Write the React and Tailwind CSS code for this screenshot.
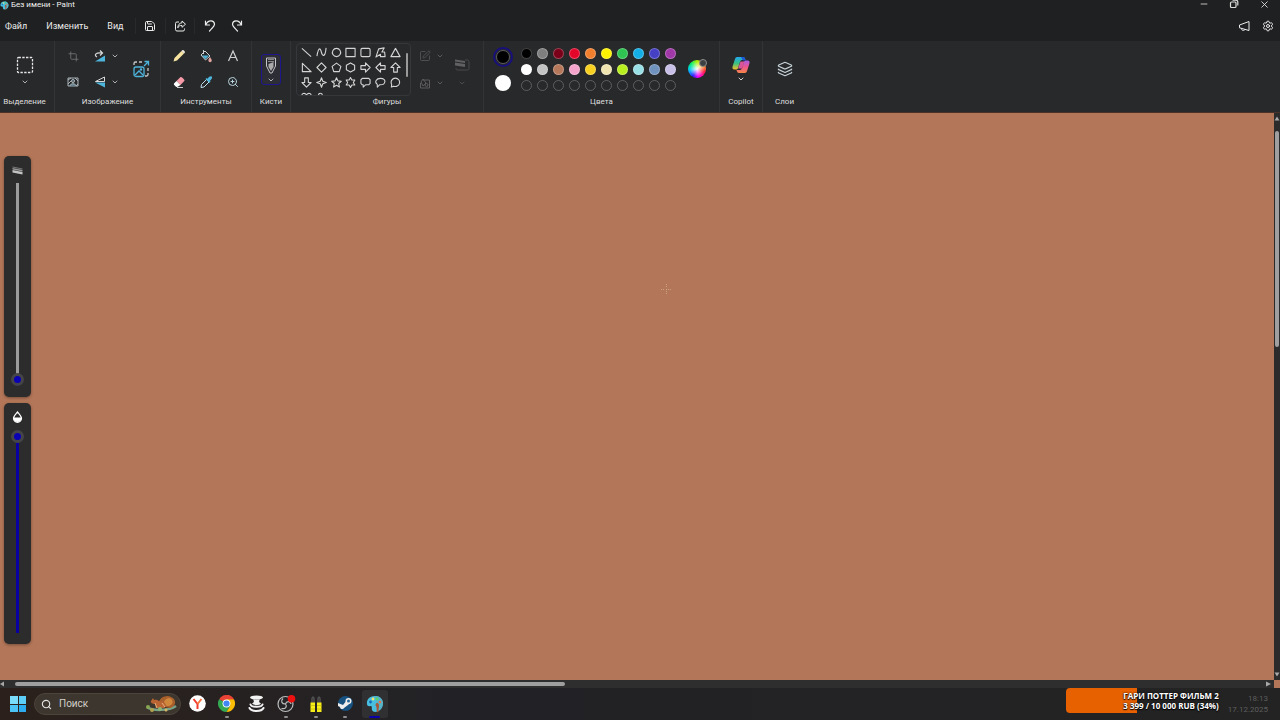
import { Save, Minus, X, Settings, ChevronDown, Crop, ZoomIn, Search, Layers, SquarePen } from "lucide-react";

const palette = [
  ["#000000", "#7f7f7f", "#7a0019", "#e3062b", "#f27f2e", "#fff200", "#2fc351", "#14aee6", "#4540c4", "#a038a8"],
  ["#ffffff", "#c3c3c3", "#b5785a", "#f4a3cb", "#f7d020", "#efe4b0", "#b8f01f", "#99dfe6", "#7092be", "#c8bfe7"],
];

const shapes = [
  "M1 1.5L11 10.5",
  "M1 10C3-2 5 2 6 6S10 12 11 1",
  "M6 1.5a4.5 4.5 0 1 0 .01 0z",
  "M1 1.5h10v9H1z",
  "M2.5 1.5h7a1.5 1.5 0 0 1 1.500 1.500v6a1.500 1.500 0 0 1-1.500 1.500h-7A1.500 1.500 0 0 1 1 9V3a1.500 1.500 0 0 1 1.500-1.500z",
  "M1 11L4 2 10 1 7.500 5.500h3L11 10.500H6V8z",
  "M6 1.500L11 10.500H1z",
  "M1.500 1.500v9H11z",
  "M6 1l5 5-5 5-5-5z",
  "M6 1.200l4.800 3.600L9 10.500H3L1.200 4.800z",
  "M6 1l4.500 2.500v5L6 11 1.500 8.500v-5z",
  "M1 4h5V1l5 5-5 5V8H1z",
  "M11 4H6V1L1 6l5 5V8h5z",
  "M4 11V6H1l5-5 5 5H8v5z",
  "M4 1v5H1l5 5 5-5H8V1z",
  "M6 .8l1.400 3.800L11.200 6 7.400 7.400 6 11.200 4.600 7.400.8 6l3.800-1.400z",
  "M6 .8l1.500 3.400 3.700.4-2.800 2.500.8 3.900L6 9.100 2.800 11l.8-3.900L.8 4.600l3.700-.4z",
  "M6 .6l1.500 2.700h3.200L9.100 6l1.600 2.700H7.500L6 11.400 4.500 8.700H1.300L2.900 6 1.300 3.300h3.200z",
  "M2.500 1.500h7L11 3v4L9.500 8.500H6L3.500 11V8.500h-1L1 7V3z",
  "M6 1.500c7 0 6 7.500-1 7L2.500 11V8C-1 5.500 1.500 1.500 6 1.500z",
  "M6 1.200a4.600 4.600 0 1 1-2 8.800L1.500 11l.3-3A4.600 4.600 0 0 1 6 1.200z",
  "M6 11L1 6C0 1 4 .5 6 3 8 .5 12 1 11 6z",
  "M3 11V4C2 .5 7 .5 7 4l4 3v4z",
];

function Group({ label, className, children }) {
  return (
    <section className={`flex shrink-0 flex-col items-center border-r border-[#333436] pt-px ${className}`}>
      <div className="flex h-[54px] w-full items-center justify-center">{children}</div>
      <h2 className="h-3 text-[8px] leading-3 whitespace-nowrap text-[#dedede]">{label}</h2>
    </section>
  );
}

function Tool({ label, children, className = "" }) {
  return (
    <button aria-label={label} className={`flex items-center justify-center ${className}`}>
      {children}
    </button>
  );
}

function Chevron({ className = "text-[#b0b0b0]" }) {
  return <ChevronDown size={8} strokeWidth={3} className={className} />;
}

function PaintIcon({ size }) {
  return (
    <svg width={size} height={size} viewBox="0 0 18 18">
      <path d="M9 1C3 1 .5 5 1 9c0 2 2 2.500 3.500 2 2 0 1 2 1.500 4 1 3 6 2 8 0 3-3 4-8 1-11.500C13.500 1.500 11 1 9 1z" fill="#49bfe0" />
      <path d="M9 1c4-.5 8 3 8 7 0 3-1 5-3 7L11 9z" fill="#55b3c8" />
      <circle cx="4.500" cy="7" r="1.400" fill="#1669b8" />
      <circle cx="7" cy="4" r="1.400" fill="#f7e36c" />
      <circle cx="11" cy="4" r="1.400" fill="#58d66a" />
      <circle cx="14" cy="7" r="1.300" fill="#ef7045" />
      <path d="M10.500 8c1.500-.5 2.500 1 2.500 2.500l-.5 6c-.4 1-1.500 1-1.700 0L10.500 12C9 10.500 9.500 9 10.500 8z" fill="#a85738" />
    </svg>
  );
}

function TitleBar() {
  return (
    <div className="flex h-3 items-start justify-between overflow-hidden">
      <div className="flex h-[10px] items-center gap-[2px]">
        <PaintIcon size={9} />
        <h1 className="text-[8px] leading-[10px] text-[#f0f0f0]">Без имени - Paint</h1>
      </div>
      <div className="flex h-2 items-center gap-5 pr-[10px] text-[#dcdcdc]">
        <Tool label="Свернуть"><Minus size={10} /></Tool>
        <Tool label="Восстановить">
          <svg width="10" height="10" viewBox="0 0 10 10" fill="none" stroke="currentColor" strokeWidth="1.200">
            <rect x="1.500" y="3" width="5.500" height="5.500" rx="1" />
            <path d="M3.500 1.200H7A1.800 1.800 0 0 1 8.800 3v3.500" />
          </svg>
        </Tool>
        <Tool label="Закрыть"><X size={11} /></Tool>
      </div>
    </div>
  );
}

function MenuBar() {
  return (
    <div className="flex h-[29px] items-center justify-between pr-[6px] pb-px pl-[5px] text-[#ececec]">
      <div className="flex items-center">
        <nav className="flex gap-[19px] pr-[11px] text-[9px] leading-4">
          <button>Файл</button>
          <button>Изменить</button>
          <button>Вид</button>
        </nav>
        <Tool label="Сохранить" className="h-4 w-[30px] border-l border-[#292a2b]"><Save size={12} /></Tool>
        <Tool label="Поделиться" className="h-4 w-[30px] border-x border-[#292a2b]">
          <svg width="12" height="12" viewBox="0 0 12 12" fill="none" stroke="currentColor" strokeLinejoin="round">
            <path d="M5 2H3a1.500 1.500 0 0 0-1.500 1.500v6A1.500 1.500 0 0 0 3 11h6a1.500 1.500 0 0 0 1.500-1.500V8.500M8 1l3.500 3.200L8 7.300V5.500C6 5.300 4.700 6 3.800 7.800 3.800 5 5.500 3 8 2.800z" />
          </svg>
        </Tool>
        <Tool label="Отменить" className="h-4 w-[30px]">
          <svg width="12" height="12" viewBox="0 0 12 12" fill="none" stroke="currentColor" strokeWidth="1.200" strokeLinecap="round">
            <path d="M1.500 1v4h4M1.800 4.700C4-.2 10-.2 10.500 4c.2 2-2 3.800-5 7" />
          </svg>
        </Tool>
        <Tool label="Повторить" className="h-4 w-[24px]">
          <svg width="12" height="12" viewBox="0 0 12 12" fill="none" stroke="currentColor" strokeWidth="1.200" strokeLinecap="round">
            <path d="M10.500 1v4h-4M10.200 4.700C8-.2 2-.2 1.500 4c-.2 2 2 3.800 5 7" />
          </svg>
        </Tool>
      </div>
      <div className="flex items-center gap-3">
        <Tool label="Отзыв">
          <svg width="12" height="12" viewBox="0 0 12 12" fill="none" stroke="currentColor" strokeLinejoin="round">
            <path d="M11 1.500v9L1.500 7.800V5zM3.500 8.500c0 2.500 3 2.500 3.500.7" />
          </svg>
        </Tool>
        <Tool label="Параметры"><Settings size={12} /></Tool>
      </div>
    </div>
  );
}

function ImageGroup() {
  return (
    <div className="flex w-full items-center gap-[13px] pl-[2px]">
      <div className="grid grid-cols-[32px_22px_8px] items-center gap-y-[14px]">
        <Tool label="Обрезать"><Crop size={11} className="text-[#707070]" /></Tool>
        <Tool label="Повернуть">
          <svg width="12" height="12" viewBox="0 0 12 12" fill="none">
            <path d="M11 5.500v6H1z" fill="#4db5dc" />
            <path d="M3 7C0 5 1 2.500 8 3M6 .5l2.500 2.500L6 5.500" stroke="#d8d8d8" strokeWidth="1.200" />
          </svg>
        </Tool>
        <Chevron />
        <Tool label="Удалить фон">
          <svg width="12" height="12" viewBox="0 0 12 12" fill="none" stroke="#a9b4b9">
            <path d="M1 2h10v8H1zM1 4l3-2M1 8l3-3M8 2l3 3M9 10l2-2" />
            <circle cx="6" cy="5" r="1.500" fill="#4a5860" />
            <path d="M3 10c0-3 6-3 6 0" fill="#5e8090" />
          </svg>
        </Tool>
        <Tool label="Отразить">
          <svg width="12" height="12" viewBox="0 0 12 12" fill="none">
            <path d="M10.500 1v4.500H1.500z" stroke="#d8d8d8" />
            <path d="M1 6.500h10V11.500z" fill="#4db5dc" />
          </svg>
        </Tool>
        <Chevron />
      </div>
      <Tool label="Изменить размер">
        <svg width="18" height="18" viewBox="0 0 18 18" fill="none" stroke="#4db5dc" strokeWidth="1.300">
          <path d="M2 5V3.500A1.500 1.500 0 0 1 3.500 2H5M7 2h3M16 8v3M16 13v1.500a1.500 1.500 0 0 1-1.500 1.500H13" stroke="#c8c8c8" />
          <rect x="2" y="7" width="10" height="9.500" rx="2" />
          <path d="M3 15l4-4 4 4M12 6l4-4M12.500 1.500h4v4" />
          <circle cx="9" cy="9.500" r=".6" />
        </svg>
      </Tool>
    </div>
  );
}

function ToolsGroup() {
  return (
    <div className="grid grid-cols-3 gap-x-[13px] gap-y-3">
      <Tool label="Карандаш">
        <svg width="14" height="14" viewBox="0 0 14 14">
          <path d="M1.500 12.500l1-3.500L9.500 2 12 4.500 5 11.500z" fill="#f7e3a0" />
          <path d="M9.500 2l.8-.8c1-.8 3.200 1.500 2.500 2.500l-.8.8z" fill="#f4f0e8" />
        </svg>
      </Tool>
      <Tool label="Заливка">
        <svg width="14" height="14" viewBox="0 0 14 14" fill="none">
          <path d="M2 6l4-4 5 5-4.500 4z" stroke="#c8d0d4" />
          <path d="M3 6.500h7L6.500 10z" fill="#4db5dc" />
          <path d="M4.500 1v4" stroke="#c8d0d4" />
          <path d="M11 8c1 1.500 1.800 2.500 1.800 3.500a1.700 1.700 0 0 1-3.400 0C9.400 10.500 10 9.500 11 8z" fill="#e3a3a0" />
        </svg>
      </Tool>
      <Tool label="Текст">
        <svg width="14" height="14" viewBox="0 0 14 14" fill="none" stroke="#cfcfcf" strokeWidth="1.200">
          <path d="M2.500 12L7 2l4.500 10M4.300 8.500h5.400" />
        </svg>
      </Tool>
      <Tool label="Ластик">
        <svg width="14" height="14" viewBox="0 0 14 14">
          <path d="M4.500 6l4-4c.8-.7 4.500 2.500 4 3.800L8.500 10z" fill="#f59aa6" />
          <path d="M4.500 6L2 8.500c-.8 1 2 3.800 3.200 3.500L8.500 10z" fill="#fff" />
          <path d="M5 12.500h6" stroke="#ccc" />
        </svg>
      </Tool>
      <Tool label="Палитра">
        <svg width="14" height="14" viewBox="0 0 14 14">
          <path d="M2 12.500l.5-3L7.500 4.500l2.500 2.500-5 5z" fill="none" stroke="#bfe1ee" />
          <path d="M6.500 4l1-1 1 .8C10 1.500 12 .8 12.800 1.800s0 2.500-1.800 3.900l.5 1-1 1z" fill="#4db5dc" />
        </svg>
      </Tool>
      <Tool label="Масштаб">
        <ZoomIn size={12} className="text-[#b9d6e0]" />
      </Tool>
    </div>
  );
}

function ShapesGroup() {
  return (
    <div className="flex w-full items-start pl-[5px]">
      <div className="flex h-[53px] w-[115px] shrink-0 overflow-hidden rounded-sm border border-[#36373a] pl-[2px]">
        <div className="grid w-[104px] shrink-0 auto-rows-[15px] grid-cols-7 content-start pt-px">
          {shapes.map((d) => (
            <button key={d} aria-label="Фигура" className="flex h-[15px] items-center justify-center">
              <svg width="11" height="11" viewBox="0 0 12 12" fill="none" stroke="#d4d4d4" strokeWidth="1.200" strokeLinejoin="round">
                <path d={d} />
              </svg>
            </button>
          ))}
        </div>
        <div className="mt-[9px] ml-[3px] h-6 w-[2px] shrink-0 rounded-full bg-[#9a9a9a]" />
      </div>
      <div className="grid grid-cols-[12px_8px] items-center gap-x-[5px] gap-y-[15px] pt-[7px] pl-2 text-[#5c5c5e]">
        <Tool label="Контур"><SquarePen size={12} strokeWidth={1.5} /></Tool>
        <Chevron className="text-[#5c5c5e]" />
        <Tool label="Заливка фигуры">
          <svg width="12" height="12" viewBox="0 0 12 12" fill="none" stroke="currentColor">
            <path d="M4 3h6.500v8h-9V6M2 5l2-3 3 4-3 3z" />
            <circle cx="7.500" cy="8" r="1.500" />
          </svg>
        </Tool>
        <Chevron className="text-[#5c5c5e]" />
      </div>
      <button aria-label="Размер" className="flex flex-col items-center gap-2 pt-[15px] pl-[10px]">
        <svg width="16" height="13" viewBox="0 0 16 13" fill="none">
          <path d="M2 10v.5A1.500 1.500 0 0 0 3.500 12h10a1.500 1.500 0 0 0 1.500-1.500v-7A1.500 1.500 0 0 0 13.500 2H11" stroke="#4a4a4c" />
          <path d="M1 1.500l10 1.500v2L1 3.500zM1 4.500L11 6v3L1 7.500z" fill="#606062" />
        </svg>
        <Chevron className="text-[#4c4c4e]" />
      </button>
    </div>
  );
}

function ColorsGroup() {
  return (
    <div className="flex w-full items-center pl-[9px]">
      <div className="flex w-5 flex-col items-center gap-2">
        <button aria-label="Цвет 1" className="size-5 rounded-full border-2 border-[#17107a] p-px">
          <span className="block size-full rounded-full border border-[#5c5c60] bg-black" />
        </button>
        <button aria-label="Цвет 2" className="size-4 rounded-full bg-white" />
      </div>
      <div className="ml-2 grid grid-cols-10 gap-[5px]">
        {palette.flat().map((color) => (
          <button
            key={color}
            aria-label={color}
            className="size-[11px] rounded-full border border-white/25 bg-clip-border"
            style={{ backgroundColor: color }}
          />
        ))}
        {Array.from({ length: 10 }, (_, i) => (
          <button key={i} aria-label="Пустой цвет" className="size-[11px] rounded-full border border-[#5f5f61]" />
        ))}
      </div>
      <button
        aria-label="Изменение цветов"
        className="relative ml-3 size-[18px] rounded-full bg-[radial-gradient(circle,white_0%,transparent_60%),conic-gradient(#a8f000,#ffd030_50deg,#ff2040_110deg,#ff00ff_170deg,#3020ff_210deg,#00c0ff_260deg,#00f070_310deg,#a8f000)]"
      >
        <span className="absolute -top-px -right-px size-2 rounded-full border border-[#8e8e8e] bg-[#3c4040]" />
      </button>
    </div>
  );
}

function Ribbon() {
  return (
    <div className="flex h-[72px] border-b border-[#4a3228] bg-[#28292b]">
      <Group label="Выделение" className="w-[55px] pr-[5px]">
        <button aria-label="Выделение" className="flex flex-col items-center gap-1 pt-1">
          <svg width="18" height="18" viewBox="0 0 18 18" fill="none" stroke="#e6e6e6" strokeWidth="1.300">
            <rect x="1.500" y="1.500" width="15" height="15" rx="1" strokeDasharray="2.400 1.350" />
          </svg>
          <Chevron />
        </button>
      </Group>
      <Group label="Изображение" className="w-[106px]"><ImageGroup /></Group>
      <Group label="Инструменты" className="w-[91px]"><ToolsGroup /></Group>
      <Group label="Кисти" className="w-[39px]">
        <button aria-label="Кисти" className="flex h-[31px] w-5 flex-col items-center justify-between rounded-[3px] border border-[#1d168c] bg-[#2d2d36] pt-[2px]">
          <svg width="12" height="17" viewBox="0 0 12 17" fill="none" stroke="#c4c4c4">
            <path d="M1.500 1h9v8L7 16H5L1.500 9z" />
            <path d="M3 2.500h6M3 4.500h6" stroke="#888" />
            <path d="M3.500 7L8.500 5v5L6 14l-2.500-4z" fill="#aaa" stroke="none" />
          </svg>
          <Chevron />
        </button>
      </Group>
      <Group label="Фигуры" className="w-[193px]"><ShapesGroup /></Group>
      <Group label="Цвета" className="w-[236px]"><ColorsGroup /></Group>
      <Group label="Copilot" className="w-[43px]">
        <button aria-label="Copilot" className="flex flex-col items-center gap-px">
          <svg width="18" height="18" viewBox="0 0 18 18">
            <defs>
              <linearGradient id="cpA" x1="0" y1="0" x2="0" y2="1">
                <stop offset="0" stopColor="#22a8f0" /><stop offset=".5" stopColor="#37bf83" /><stop offset="1" stopColor="#f4bd28" />
              </linearGradient>
              <linearGradient id="cpB" x1="0" y1="0" x2="0" y2="1">
                <stop offset="0" stopColor="#a45ce8" /><stop offset=".5" stopColor="#ec5590" /><stop offset="1" stopColor="#f58648" />
              </linearGradient>
            </defs>
            <path d="M5 1h6c1.500 0 2 1 2.500 3H10c-1 0-1.500.8-2 2L6 12c-.4 1-1 1.500-2 1.500H2.500C.5 13.500 0 12 .7 10L3 3c.4-1.300 1-2 2-2z" fill="url(#cpA)" />
            <path d="M13 17H7c-1.500 0-2-1-2.500-3H8c1 0 1.500-.8 2-2l2-6c.4-1 1-1.500 2-1.500h1.500c2 0 2.500 1.500 1.800 3.500L15 15c-.4 1.300-1 2-2 2z" fill="url(#cpB)" />
            <path d="M9 1h2c1.500 0 2 1 2.500 3.500H11z" fill="#1d55d8" />
            <path d="M8.500 5.500h4L10 12.500H6z" fill="#d8559a" />
          </svg>
          <Chevron className="text-[#d0d0d0]" />
        </button>
      </Group>
      <Group label="Слои" className="w-[43px] border-r-0">
        <Tool label="Слои"><Layers size={16} strokeWidth={1.8} className="text-[#c4d2d8]" /></Tool>
      </Group>
    </div>
  );
}

const sliderBase =
  "h-[203px] w-[13px] appearance-none bg-transparent [writing-mode:vertical-lr] [direction:rtl] [&::-webkit-slider-runnable-track]:h-full [&::-webkit-slider-runnable-track]:w-[13px] [&::-webkit-slider-runnable-track]:bg-[length:3px_100%] [&::-webkit-slider-runnable-track]:bg-center [&::-webkit-slider-runnable-track]:bg-no-repeat [&::-webkit-slider-thumb]:size-[13px] [&::-webkit-slider-thumb]:appearance-none [&::-webkit-slider-thumb]:rounded-full [&::-webkit-slider-thumb]:border-[3px] [&::-webkit-slider-thumb]:border-[#454547] [&::-webkit-slider-thumb]:bg-[#0a00b4]";

function SidePanel({ icon, label, value, track }) {
  return (
    <div className="flex w-[27px] flex-col items-center gap-[6px] rounded-[5px] bg-[#2c2c2c] pt-[7px] pb-[11px] shadow-[0_1px_3px_rgba(0,0,0,0.35)]">
      <div className="flex h-[14px] items-center">{icon}</div>
      <input type="range" aria-label={label} defaultValue={value} className={`${sliderBase} ${track}`} />
    </div>
  );
}

function Canvas() {
  return (
    <main className="flex grow flex-col bg-[#b37658]">
      <div className="flex grow">
        <div className="relative flex grow flex-col gap-[6px] pt-[43px] pl-1">
          <SidePanel
            label="Размер"
            value={0}
            track="[&::-webkit-slider-runnable-track]:bg-[linear-gradient(#9b9b9b_98%,#0a00b4_98%)]"
            icon={
              <svg width="11" height="9" viewBox="0 0 11 9">
                <path d="M.5.500l10 2v1l-10-2z" fill="#777" />
                <path d="M.5 2l10 2v1.500l-10-2z" fill="#999" />
                <path d="M.5 4l10 2v2.500l-10-2z" fill="#c4c4c4" />
              </svg>
            }
          />
          <SidePanel
            label="Непрозрачность"
            value={100}
            track="[&::-webkit-slider-runnable-track]:bg-[linear-gradient(#0a00a0,#0a00a0)]"
            icon={
              <svg width="11" height="12" viewBox="0 0 11 12">
                <path d="M5.500 1C4 2.800 1.500 5 1.500 7.300a4 4 0 0 0 8 0C9.500 5 7 2.800 5.500 1z" fill="none" stroke="#fff" strokeWidth="1.200" />
                <path d="M1.500 6.500h8c.5 6-8.500 6-8 0z" fill="#fff" />
              </svg>
            }
          />
          <svg className="absolute top-[171px] left-[661px]" width="11" height="11" viewBox="0 0 11 11" stroke="#d8b48e" strokeOpacity=".7">
            <path d="M5.500 0v4M5.500 7v4M0 5.500h4M7 5.500h4" strokeDasharray="1 1" />
            <path d="M5 5.500h1" stroke="#cfd49c" />
          </svg>
        </div>
        <div className="flex w-[6px] shrink-0 flex-col items-center bg-[#2b2b2b] py-[3px]">
          <svg width="6" height="5" viewBox="0 0 6 5"><path d="M3 .500L5.500 4.500h-5z" fill="#a8a8a8" /></svg>
          <div className="flex w-1 grow flex-col pt-[10px]">
            <div className="h-2/5 rounded-full bg-[#9f9f9f]" />
          </div>
          <svg width="6" height="5" viewBox="0 0 6 5"><path d="M3 4.500L.5.500h5z" fill="#a8a8a8" /></svg>
        </div>
      </div>
      <div className="mr-[6px] flex h-2 items-center justify-between bg-[#2e2e2e]">
        <svg width="5" height="6" viewBox="0 0 5 6"><path d="M0 3l4-2.500v5z" fill="#a8a8a8" /></svg>
        <div className="flex grow pl-[10px]">
          <div className="h-1 w-[44%] rounded-full bg-[#9f9f9f]" />
        </div>
        <svg width="9" height="6" viewBox="0 0 9 6"><path d="M6 3L1 .500v5z" fill="#a8a8a8" /></svg>
      </div>
    </main>
  );
}

function TaskButton({ label, running, active, children }) {
  return (
    <button
      aria-label={label}
      className={`flex h-[28px] w-[26px] flex-col items-center justify-between rounded-[3px] pt-[5px] ${active ? "bg-[#303033]" : ""}`}
    >
      {children}
      <span className={`h-[2px] rounded-full ${active ? "w-[11px] bg-[#0c00a8]" : running ? "w-1 bg-[#8f8f8f]" : "w-1"}`} />
    </button>
  );
}

function Taskbar() {
  return (
    <footer className="relative flex h-8 shrink-0 items-center justify-between bg-linear-to-r from-[#2b201b] via-[#222226] via-35% to-[#232323] pr-3 pl-[10px]">
      <div className="flex items-center">
        <button aria-label="Пуск" className="grid size-4 grid-cols-2 gap-px">
          <span className="bg-[#79dcfa]" />
          <span className="bg-[#5bcdf7]" />
          <span className="bg-[#4cc2f5]" />
          <span className="bg-[#2cacee]" />
        </button>
        <label className="mr-[3px] ml-2 flex h-[22px] w-[147px] items-center gap-[7px] rounded-full border border-[#4a443b] bg-[#3c362e] pr-px pl-[6px]">
          <Search size={11} strokeWidth={2.5} className="shrink-0 text-[#e0e0e0]" />
          <input placeholder="Поиск" aria-label="Поиск" className="w-0 grow text-[10px] leading-4 outline-none placeholder:text-[#d2cec8]" />
          <svg width="34" height="18" viewBox="0 0 34 18">
            <path d="M2 12c5 4 22 4 29-1" fill="none" stroke="#78a287" strokeWidth="2.500" />
            <path d="M15 11C11 4 21-1 26 2c7 3 4 10-1 11z" fill="#a9602c" />
            <path d="M19 9c-1-5 6-8 8-4s-2 6-5 6z" fill="#d0883d" />
            <path d="M6 6l2-3 1 2c4-1 4 2 9 2 3 0 4 5 1 6h-8c-1-1 0-3-1-4C8 9 5 8 6 6z" fill="#ba6433" />
            <path d="M10 8l2 5M17 8l3 4" stroke="#e6b080" />
            <circle cx="3" cy="12" r="2" fill="#89a652" />
            <circle cx="7" cy="15" r="2" fill="#b1a34e" />
            <circle cx="15" cy="14" r="2" fill="#8db474" />
            <circle cx="21" cy="15" r="1.500" fill="#d7b966" />
          </svg>
        </label>
        <div className="flex w-[204px] justify-between">
          <TaskButton label="Яндекс Браузер">
            <svg width="17" height="17" viewBox="0 0 17 17" fill="none">
              <circle cx="8.500" cy="8.500" r="8.300" fill="#fff" />
              <path d="M4.500 4l4 5M8.500 8.500V14" stroke="#f23b2c" strokeWidth="2" />
              <path d="M12.500 4l-4 5" stroke="#f9733a" strokeWidth="2" />
            </svg>
          </TaskButton>
          <TaskButton label="Chrome" running>
            <svg width="17" height="17" viewBox="0 0 18 18">
              <path d="M9 9L1.200 4.500A9 9 0 0 1 16.800 4.500z" fill="#e94335" />
              <path d="M9 9L1.200 4.500A9 9 0 0 0 9 18l4-6.700z" fill="#34a853" />
              <path d="M9 4.500h7.800A9 9 0 0 1 9 18l4-6.700z" fill="#fbbc05" />
              <path d="M9 0a9 9 0 0 1 7.800 4.500H9z" fill="#e94335" />
              <circle cx="9" cy="9" r="4.200" fill="#fff" />
              <circle cx="9" cy="9" r="3.300" fill="#4285f4" />
            </svg>
          </TaskButton>
          <TaskButton label="Лаунчер">
            <svg width="17" height="17" viewBox="0 0 17 17" fill="none" stroke="#f2f2f2" strokeLinecap="round">
              <ellipse cx="8.500" cy="2.500" rx="6.500" ry="2" fill="#f2f2f2" stroke="none" />
              <path d="M5 4.500c1.500 2 1 3-1 4 1.500 2 7.500 2 9 0-2-1-2.500-2-1-4" fill="#f2f2f2" stroke="none" />
              <path d="M2.500 9.500c1 3 11 3 12 0M1.500 13c2 4 12 4 14 0" strokeWidth="2" />
            </svg>
          </TaskButton>
          <TaskButton label="OBS" running>
            <svg width="20" height="18" viewBox="0 0 20 18" fill="none">
              <circle cx="9.500" cy="9" r="7.500" fill="#242426" stroke="#bcbcbc" strokeWidth="1.200" />
              <path d="M9.500 9C5.500 9 4.500 6 7 3.500M9.500 9c1-3.500 5-3 5.500 0M9.500 9c2 2.500 0 5.500-4 4.500" stroke="#bcbcbc" strokeWidth="1.200" />
              <circle cx="15.500" cy="3.800" r="3.800" fill="#ef1010" />
            </svg>
          </TaskButton>
          <TaskButton label="Бинокль" running>
            <svg width="14" height="18" viewBox="0 0 14 18">
              <path d="M3 8V4c0-3 2-3 2 0v4M9 8V4c0-3 2-3 2 0v4" fill="none" stroke="#69696a" />
              <path d="M1.500 7.500H6V17H1.500zM8 7.500h4.500V17H8z" fill="#f6ee16" />
              <path d="M1.500 10.500H6M1.500 14H6M8 10.500h4.500M8 14h4.500" stroke="#b7ae0e" strokeWidth=".6" />
            </svg>
          </TaskButton>
          <TaskButton label="Steam" running>
            <svg width="17" height="17" viewBox="0 0 17 17">
              <circle cx="8.500" cy="8.500" r="7.500" fill="#175180" />
              <path d="M1 8l5 2 4-5 4 2-3 3-4 3c-1 2-4 1-4-1L1 11z" fill="#ededed" />
              <circle cx="11.500" cy="6" r="3" fill="#ededed" />
              <circle cx="11.500" cy="6" r="1.500" fill="#276593" />
            </svg>
          </TaskButton>
          <TaskButton label="Paint" active><PaintIcon size={18} /></TaskButton>
        </div>
      </div>
      <div className="text-right text-[8px] leading-[11px] text-[#5e5e5e]">
        <p>18:13</p>
        <p>17.12.2025</p>
      </div>
      {/* donation goal sits on top of the tray */}
      <div className="absolute top-0 right-1 flex h-[25px] w-[210px] flex-col items-center justify-center rounded-[4px] bg-[linear-gradient(90deg,#e76100_34%,transparent_34%)] font-['Open_Sans',sans-serif] text-[8px] leading-[10px] font-bold text-white [text-shadow:0_0_2px_#000,0_1px_1px_#000]">
        <p>ГАРИ ПОТТЕР ФИЛЬМ 2</p>
        <p>3 399 / 10 000 RUB (34%)</p>
      </div>
    </footer>
  );
}

export default function App() {
  return (
    <div className="flex min-h-screen flex-col bg-[#1f2021] font-[Roboto,'Noto_Sans',sans-serif]">
      <TitleBar />
      <MenuBar />
      <Ribbon />
      <Canvas />
      <Taskbar />
    </div>
  );
}
